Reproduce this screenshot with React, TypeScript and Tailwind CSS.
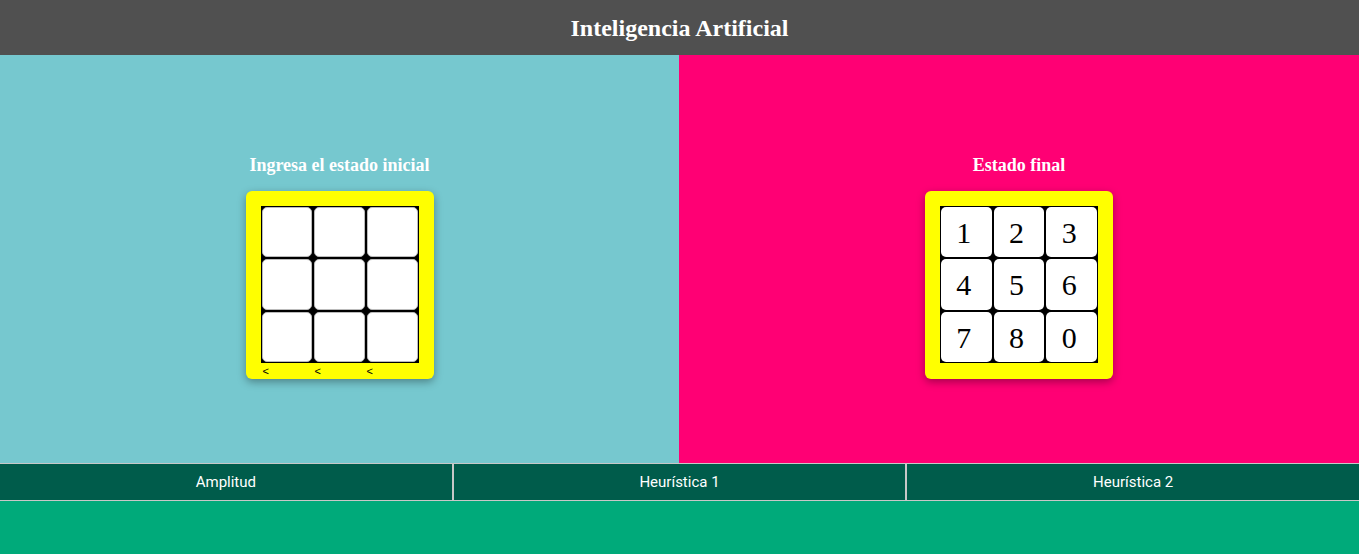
import React from 'react';

const goal = ['1', '2', '3', '4', '5', '6', '7', '8', '0'];

function Board({ values, editable }: { values: string[]; editable?: boolean }) {
  return (
    <div className="w-[188px] h-[188px] bg-[#ffff00] rounded-md shadow-[0_3px_8px_rgba(0,0,0,0.35)] p-[15px] relative">
      <div className="grid grid-cols-3 gap-[2px] bg-black p-[1px] w-[158px] h-[157px]">
        {values.map((v, i) => (
          <div
            key={i}
            className={
              'bg-white rounded-[5px] flex items-center justify-center pr-[5px] pt-[2px] text-[30px] text-black leading-none ' +
              (editable ? 'border-[1.5px] border-[#bbb]' : '')
            }
            style={{ fontFamily: '"Liberation Serif", serif' }}
          >
            {v}
          </div>
        ))}
      </div>
      {editable && (
        <div className="absolute left-[17px] top-[175px] flex text-[11px] leading-none text-black" style={{ fontFamily: '"Liberation Sans", sans-serif' }}>
          <span className="w-[52px]">&lt;</span>
          <span className="w-[52px]">&lt;</span>
          <span>&lt;</span>
        </div>
      )}
    </div>
  );
}

export default function App() {
  const serif = { fontFamily: '"Liberation Serif", serif' };
  return (
    <div className="w-[1359px] h-[554px] flex flex-col bg-[#00aa7a]">
      <header className="h-[55px] bg-[#505050] flex items-center justify-center">
        <h1 className="text-white font-bold text-[24px]" style={serif}>
          Inteligencia Artificial
        </h1>
      </header>

      <main className="h-[408px] flex">
        <section className="w-[679px] bg-[#76c8cf] flex flex-col items-center pt-[100px]">
          <h2 className="text-white font-bold text-[18px] leading-5 mb-4" style={serif}>
            Ingresa el estado inicial
          </h2>
          <Board values={Array(9).fill('')} editable />
        </section>
        <section className="flex-1 bg-[#ff0074] flex flex-col items-center pt-[100px]">
          <h2 className="text-white font-bold text-[18px] leading-5 mb-4" style={serif}>
            Estado final
          </h2>
          <Board values={goal} />
        </section>
      </main>

      <nav className="h-[38px] flex border-y border-[#c8c8c8] bg-[#005c4b]" style={{ fontFamily: 'Roboto, sans-serif' }}>
        <button className="flex-1 text-white text-[15px] border-r border-[#c8c8c8]">Amplitud</button>
        <button className="flex-1 text-white text-[15px] border-x border-[#c8c8c8]">Heurística 1</button>
        <button className="flex-1 text-white text-[15px] border-l border-[#c8c8c8]">Heurística 2</button>
      </nav>
    </div>
  );
}
